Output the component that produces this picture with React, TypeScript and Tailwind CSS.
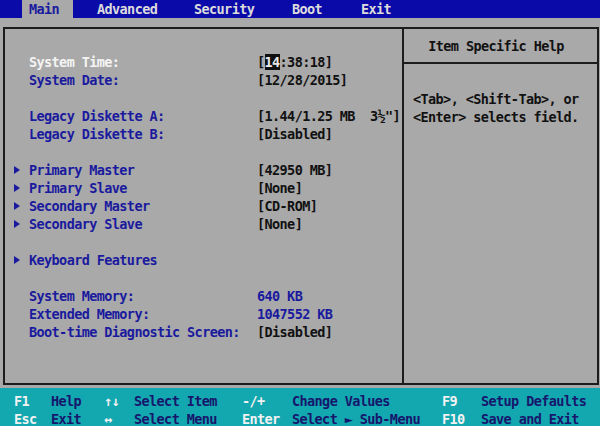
import type { ReactNode } from "react";

type Row = {
    label?: string;
    value?: ReactNode;
    sub?: boolean;
    selected?: boolean;
    blueValue?: boolean;
};

const rows: Row[] = [
    {
        label: "System Time:",
        selected: true,
        value: (
            <>
                [<span className="bg-[#101010] text-[#e8e8e8]">14</span>:38:18]
            </>
        ),
    },
    { label: "System Date:", value: "[12/28/2015]" },
    {},
    { label: "Legacy Diskette A:", value: "[1.44/1.25 MB  3½\"]" },
    { label: "Legacy Diskette B:", value: "[Disabled]" },
    {},
    { label: "Primary Master", value: "[42950 MB]", sub: true },
    { label: "Primary Slave", value: "[None]", sub: true },
    { label: "Secondary Master", value: "[CD-ROM]", sub: true },
    { label: "Secondary Slave", value: "[None]", sub: true },
    {},
    { label: "Keyboard Features", sub: true },
    {},
    { label: "System Memory:", value: "640 KB", blueValue: true },
    { label: "Extended Memory:", value: "1047552 KB", blueValue: true },
    { label: "Boot-time Diagnostic Screen:", value: "[Disabled]" },
];

const tabs = [
    { name: "Main", box: "ml-[22px] w-[51px] pl-[7px] bg-[#a9a9a9] text-[#1a1a9e]" },
    { name: "Advanced", box: "ml-[24px] w-[97px]" },
    { name: "Security", box: "w-[98px]" },
    { name: "Boot", box: "w-[69px]" },
    { name: "Exit", box: "w-[60px]" },
];

function Arrow() {
    return (
        <svg width="6" height="8" viewBox="0 0 6 8" className="inline-block">
            <path d="M0 0 L6 4 L0 8 Z" fill="currentColor" />
        </svg>
    );
}

function MenuBar() {
    return (
        <nav className="h-[18px] bg-[#0a0aa8] flex text-[#dcdcdc]">
            {tabs.map((t) => (
                <div key={t.name} className={`h-full flex items-center ${t.box}`}>
                    {t.name}
                </div>
            ))}
        </nav>
    );
}

function KeyBar() {
    const lines = [
        ["F1", "Help", "↑↓", "Select Item", "-/+", "Change Values", "F9", "Setup Defaults"],
        ["Esc", "Exit", "↔", "Select Menu", "Enter", "Select ► Sub-Menu", "F10", "Save and Exit"],
    ];
    const widths = ["w-[37px]", "w-[53px]", "w-[30px]", "w-[108px]", "w-[50px]", "w-[150px]", "w-[39px]", "flex-1"];

    return (
        <footer className="h-[38px] bg-[#13a7b0] pt-[4px] pl-[14px]">
            {lines.map((line, i) => (
                <div key={i} className="flex h-[18px] items-center">
                    {line.map((txt, j) => (
                        <span
                            key={j}
                            className={`${widths[j]} whitespace-pre ${j % 2 === 0 ? "text-[#f2f2f2]" : "text-[#16166c]"}`}
                        >
                            {txt}
                        </span>
                    ))}
                </div>
            ))}
        </footer>
    );
}

export default function App() {
    return (
        <div className="w-[600px] h-[426px] overflow-hidden flex flex-col bg-[#a9a9a9] font-['DejaVu_Sans_Mono',monospace] font-bold text-[13.5px] tracking-[-0.6px] leading-[18px]">
            <MenuBar />

            <main className="flex-1 flex pt-[9px] pb-[3px] pl-[3px] pr-[1px]">
                <div className="flex-1 flex border-2 border-[#1c1c1c]">
                    <section className="w-[397px] pt-[24px] pl-[9px]">
                        {rows.map((r, i) => (
                            <div key={i} className="h-[18px] flex items-center">
                                <span className="w-[15px] flex items-center text-[#1a1a9e]">
                                    {r.sub && <Arrow />}
                                </span>
                                <span
                                    className={`w-[228px] whitespace-pre ${r.selected ? "text-[#f4f4f4]" : "text-[#1a1a9e]"}`}
                                >
                                    {r.label}
                                </span>
                                <span className={`whitespace-pre ${r.blueValue ? "text-[#1a1a9e]" : "text-[#111111]"}`}>
                                    {r.value}
                                </span>
                            </div>
                        ))}
                    </section>

                    <aside className="flex-1 flex flex-col border-l-2 border-[#1c1c1c] text-[#111111]">
                        <div className="h-[35px] border-b-2 border-[#1c1c1c] flex items-center justify-center pr-[9px]">
                            Item Specific Help
                        </div>
                        <div className="pt-[26px] pl-[9px]">
                            <div>&lt;Tab&gt;, &lt;Shift-Tab&gt;, or</div>
                            <div>&lt;Enter&gt; selects field.</div>
                        </div>
                    </aside>
                </div>
            </main>

            <KeyBar />
        </div>
    );
}
